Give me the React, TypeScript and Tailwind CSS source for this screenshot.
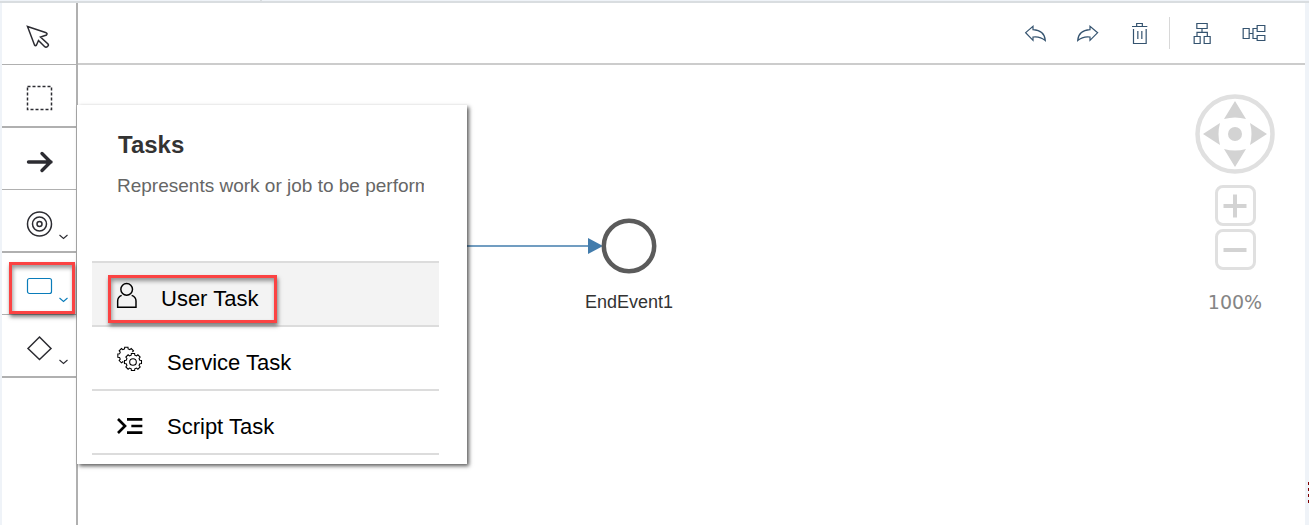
import type { ReactNode } from "react";

function Chevron() {
  return (
    <svg className="absolute right-2 bottom-2.5 h-2 w-2.5" viewBox="0 0 10 8" fill="none" stroke="currentColor" strokeWidth="1.1">
      <path d="M1.5 2 L5.5 5.5 L9.5 2" />
    </svg>
  );
}

type ToolProps = { label: string; tall?: boolean; active?: boolean; menu?: boolean; children: ReactNode };

function Tool({ label, tall, active, menu, children }: ToolProps) {
  return (
    <button
      type="button"
      aria-label={label}
      className={`relative flex w-full items-start justify-center border-[#b0b0b0] pt-5 ${tall ? "h-[63px] border-b-2" : "h-[62px] border-b"} ${active ? "text-[#0a7cba]" : "text-[#2c2c32]"}`}
    >
      <svg className="h-7 w-7" viewBox="0 0 28 28" fill="none" stroke="currentColor" strokeWidth="1.5">
        {children}
      </svg>
      {menu && <Chevron />}
      {active && <span className="absolute top-[9px] left-[7px] h-[52px] w-[66px] border-3 border-[#fb4343] shadow-[1px_3px_4px_rgba(0,0,0,0.5),inset_1px_3px_4px_rgba(0,0,0,0.4)]" />}
    </button>
  );
}

function Action({ label, box, children }: { label: string; box: string; children: ReactNode }) {
  return (
    <button type="button" aria-label={label} className="text-[#34536f]">
      <svg className="block h-6 w-6" viewBox={box} fill="none" stroke="currentColor" strokeWidth="3.6">
        {children}
      </svg>
    </button>
  );
}

function gear(cx: number, cy: number, outer: number, inner: number) {
  const points: string[] = [];
  for (let i = 0; i < 8; i++) {
    const a = (i * Math.PI) / 4;
    for (const [offset, r] of [[-0.26, inner], [-0.19, outer], [0.19, outer], [0.26, inner]]) {
      points.push(`${(cx + r * Math.cos(a + offset)).toFixed(1)} ${(cy + r * Math.sin(a + offset)).toFixed(1)}`);
    }
  }
  return `M${points.join("L")}Z`;
}

const iconUser = (
  <svg className="h-8 w-[22px]" viewBox="120 96 66 96" fill="none" stroke="black" strokeWidth="4.4">
    <circle cx="152" cy="118" r="17.5" />
    <path d="M137 136 Q125 141 125 153 V171.5 H180 V153 Q180 141 167 136" />
  </svg>
);

const iconGears = (
  <svg className="h-8 w-7" viewBox="120 288 84 96" fill="none" stroke="black" strokeWidth="3.2">
    <path d={gear(151, 317, 26, 21)} />
    <circle cx="172" cy="336" r="30" fill="white" stroke="none" />
    <path d={gear(171, 336, 26, 21)} fill="white" />
    <circle cx="171" cy="336" r="10" />
  </svg>
);

const iconScript = (
  <svg className="h-8 w-7" viewBox="120 480 84 96" fill="none" stroke="black" strokeWidth="8">
    <path d="M126 507 L147 528 L126 549" />
    <path d="M153 508 H199 M166 528 H199 M153 548 H199" />
  </svg>
);

const tasks = [
  { name: "User Task", icon: iconUser, selected: true },
  { name: "Service Task", icon: iconGears, selected: false },
  { name: "Script Task", icon: iconScript, selected: false },
];

function TaskMenu() {
  return (
    <section className="absolute top-[102px] left-[75px] z-10 w-[390px] bg-white pt-[26px] pr-7 pb-[9px] pl-[15px] shadow-[2px_2px_4px_rgba(0,0,0,0.65)]">
      <h2 className="pl-[26px] text-[24px] leading-7 font-bold text-[#333]">Tasks</h2>
      <p className="mt-[15px] mr-[15px] ml-[25px] overflow-hidden text-[19px] leading-6 whitespace-nowrap text-[#666]">Represents work or job to be performed</p>
      <ul className="mt-[63px] border-t-2 border-[#dcdcdc]">
        {tasks.map((task) => (
          <li key={task.name} className={`relative border-b-2 border-[#dcdcdc] ${task.selected ? "bg-[#f3f3f3]" : ""}`}>
            <button type="button" className="flex h-[62px] w-full items-center gap-[23px] pt-2 pl-6 text-left text-[22px] text-black">
              {task.icon}
              {task.name}
            </button>
            {task.selected && <span className="pointer-events-none absolute top-3 left-4 h-12 w-[169px] border-3 border-[#fb4343] shadow-[1px_3px_4px_rgba(0,0,0,0.5),inset_1px_3px_4px_rgba(0,0,0,0.4)]" />}
          </li>
        ))}
      </ul>
    </section>
  );
}

function ZoomButton({ label, path }: { label: string; path: string }) {
  return (
    <button type="button" aria-label={label} className="flex h-[41px] w-[41px] items-center justify-center rounded-lg border-3 border-[#e0e0e0] bg-white">
      <svg className="h-6 w-6" viewBox="0 0 24 24" stroke="#d3d3d3" strokeWidth="4">
        <path d={path} />
      </svg>
    </button>
  );
}

export default function App() {
  return (
    <div className="flex min-h-screen flex-col bg-[#eff3f8] font-['Liberation_Sans',Arial,sans-serif]">
      <div className="relative h-[3px] border-b-2 border-[#d9dde0]">
        <div className="h-px w-[262px] border-r-2 border-[#d9dde0]" />
      </div>
      <div className="relative mr-1 ml-0.5 flex flex-1 bg-white">
        <nav aria-label="Tools" className="w-19 shrink-0 border-r-2 border-[#b0b0b0]">
          <Tool label="Select">
            <path d="M2.5 3.5 L20.5 9.5 Q23 10.5 21.5 12 L15.5 14 L23 21 Q24 22.5 22.5 23.5 Q21 25 19.5 23.5 L13.5 17.5 L11.5 22 Q10.5 23.5 9.5 22 Z" />
          </Tool>
          <Tool label="Marquee select" tall>
            <rect x="2.5" y="1.5" width="24" height="23" strokeDasharray="3 2" />
          </Tool>
          <Tool label="Connect">
            <path d="M3.5 14 H26 M17 5.5 L25.5 14 L17 22.5" strokeWidth="3.4" strokeLinecap="round" />
          </Tool>
          <Tool label="Events" tall menu>
            <circle cx="14.5" cy="14" r="12" />
            <circle cx="14.5" cy="14" r="7" />
            <circle cx="14.5" cy="14" r="2.5" />
          </Tool>
          <Tool label="Tasks" active menu>
            <rect x="2.5" y="5.5" width="24" height="15" rx="2" strokeWidth="1.2" />
          </Tool>
          <Tool label="Gateways" tall menu>
            <path d="M14.5 2 L26 13.5 L14.5 24.5 L3 13.5 Z" />
          </Tool>
        </nav>
        <TaskMenu />
        <div className="flex min-w-0 flex-1 flex-col">
          <header className="flex h-[62px] items-center justify-end border-b-2 border-[#ccc] pr-[39px]">
            <div className="flex gap-7">
              <Action label="Undo" box="42 63 72 72">
                <path d="M47 98 L69 79 V89 Q104 91 106 122 Q90 108 69 111 V121 Z" />
              </Action>
              <Action label="Redo" box="198 63 72 72">
                <path d="M263 98 L240 79 V89 Q205 91 203 122 Q219 108 240 111 V121 Z" />
              </Action>
              <Action label="Delete" box="354 63 72 72">
                <path d="M366 79.5 H412 M380 79 V70.5 H397 V79 M370.5 87 V130.5 H408.5 V87 M383.5 93 V117 M395.5 93 V117" />
              </Action>
            </div>
            <div className="mr-5 ml-[17px] h-8 w-px bg-[#d8d8d8]" />
            <div className="flex gap-7">
              <Action label="Vertical layout" box="540 63 72 72">
                <path d="M560.5 70.5 H591.5 V85.5 H560.5 Z M576 86 V97 M561 109 V97 H592 V109 M552.5 109.5 H570.5 V130.5 H552.5 Z M582.5 109.5 H600.5 V130.5 H582.5 Z" />
              </Action>
              <Action label="Horizontal layout" box="696 63 72 72">
                <path d="M699.5 85.5 H717.5 V115.5 H699.5 Z M718 100.5 H729 M741 85.5 H729 V115.5 H741 M741.5 76.5 H764.5 V94.5 H741.5 Z M741.5 106.5 H764.5 V121.5 H741.5 Z" />
              </Action>
            </div>
          </header>
          <main className="relative flex-1 overflow-hidden">
            <svg className="absolute top-[151px] left-[389px] h-[60px] w-[192px]" viewBox="0 0 192 60" fill="none">
              <path d="M0 30 H122" stroke="#427cac" strokeWidth="1.7" />
              <path d="M121 22 L136 30 L121 38 Z" fill="#427cac" />
              <circle cx="162" cy="30" r="25.2" fill="white" stroke="#5b5b5b" strokeWidth="4.5" />
            </svg>
            <p className="absolute top-[227px] left-[501px] w-[100px] text-center text-[18px] leading-5 text-[#333]">EndEvent1</p>
            <div className="absolute top-[29px] right-[30px] flex w-20 flex-col items-center">
              <button type="button" aria-label="Pan" className="h-20 w-20">
                <svg className="block h-20 w-20" viewBox="0 0 80 80" fill="#d3d3d3">
                  <circle cx="40" cy="40" r="37.5" fill="white" stroke="#e0e0e0" strokeWidth="4.5" />
                  <circle cx="40" cy="40" r="7" />
                  <path d="M40 7 L51 25 Q40 22 29 25 Z M40 73 L51 55 Q40 58 29 55 Z M8 40 L25 29 Q22 40 25 51 Z M72 40 L55 29 Q58 40 55 51 Z" />
                </svg>
              </button>
              <div className="mt-[11px] flex flex-col gap-[3px]">
                <ZoomButton label="Zoom in" path="M0.5 12 H23.5 M12 0.5 V23.5" />
                <ZoomButton label="Zoom out" path="M0.5 12 H23.5" />
              </div>
              <span className="mt-5 font-['DejaVu_Sans',Verdana,sans-serif] text-[19px] leading-6 text-[#858585]">100%</span>
            </div>
          </main>
        </div>
        <div className="absolute top-[479px] -right-1 flex w-px flex-col gap-[3px]">
          <i className="h-[3px] bg-[#800000]" />
          <i className="h-[3px] bg-[#800000]" />
          <i className="h-[3px] bg-[#800000]" />
          <i className="h-[3px] bg-[#800000]" />
        </div>
      </div>
    </div>
  );
}
